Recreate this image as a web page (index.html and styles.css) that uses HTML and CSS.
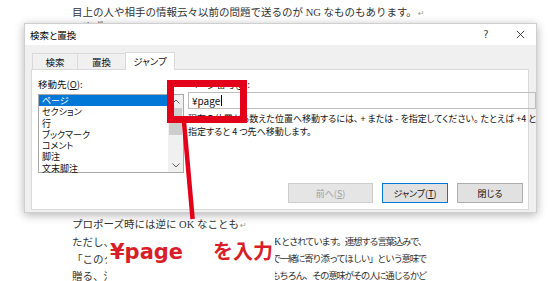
FILE: index.html
```html
<!DOCTYPE html>
<html lang="ja">
<head>
<meta charset="utf-8">
<title>検索と置換 - ジャンプ</title>
<link rel="stylesheet" href="styles.css">
</head>
<body>
<div class="page">
  <div class="doc">
    <p class="line l1">目上の人や相手の情報云々以前の問題で送るのが <span class="lat">NG</span> なものもあります。<span class="ret">↵</span></p>
    <p class="line l2">　まず<span class="ret">↵</span></p>
    <div class="lower">
      <p class="line">プロポーズ時には逆に <span class="lat">OK</span> なことも<span class="ret">↵</span></p>
      <p class="line row"><span class="lft">ただし、</span><span class="r"><span class="lat">OK</span> とされています。連想する言葉込みで、</span></p>
      <p class="line row"><span class="lft">「このタ</span><span class="r">まで一緒に寄り添ってほしい」という意味で</span></p>
      <p class="line row"><span class="lft">贈る、汀</span><span class="r">。もちろん、その意味がその人に通じるかど</span></p>
    </div>
  </div>

  <div class="dialog">
    <div class="titlebar">
      <span class="title">検索と置換</span>
      <span class="tb-btns">
        <span class="help">?</span>
        <span class="close"><svg width="10" height="10" viewBox="0 0 10 10"><path d="M1 1 L9 9 M9 1 L1 9" stroke="#333" stroke-width="1" fill="none"/></svg></span>
      </span>
    </div>
    <div class="dbody">
      <div class="tabs">
        <span class="tab t1">検索</span>
        <span class="tab t2">置換</span>
        <span class="tab t3 active">ジャンプ</span>
      </div>
      <div class="panel">
        <div class="cols">
          <div class="left">
            <div class="lbl">移動先(<u>O</u>):</div>
            <div class="listbox">
              <ul class="items">
                <li class="sel">ページ</li>
                <li>セクション</li>
                <li>行</li>
                <li>ブックマーク</li>
                <li>コメント</li>
                <li>脚注</li>
                <li>文末脚注</li>
              </ul>
              <div class="vscroll">
                <span class="arrow"><svg width="8" height="5" viewBox="0 0 8 5"><path d="M0.5 4.5 L4 1 L7.5 4.5" stroke="#606060" stroke-width="1" fill="none"/></svg></span>
                <span class="thumb"></span>
                <span class="arrow down"><svg width="8" height="5" viewBox="0 0 8 5"><path d="M0.5 0.5 L4 4 L7.5 0.5" stroke="#606060" stroke-width="1" fill="none"/></svg></span>
              </div>
            </div>
          </div>
          <div class="right">
            <div class="lbl">ページ番号(<u>E</u>):</div>
            <div class="input">¥page<span class="caret"></span></div>
            <p class="desc">現在の位置から数えた位置へ移動するには、 + または - を指定してください。 たとえば +4 と<br>指定すると 4 つ先へ移動します。</p>
          </div>
        </div>
        <div class="btns">
          <span class="btn disabled">前へ(<u>S</u>)</span>
          <span class="btn default">ジャンプ(<u>T</u>)</span>
          <span class="btn">閉じる</span>
        </div>
      </div>
    </div>
  </div>

  <div class="mark-box"></div>
  <svg class="mark-line" width="550" height="281" viewBox="0 0 550 281"><line x1="184" y1="122" x2="192.6" y2="219" stroke="#e2001a" stroke-width="4.5"/></svg>
  <div class="callout"><span class="c-lat">¥page</span><span class="c-ja">を入力</span></div>
</div>
</body>
</html>
```

FILE: styles.css
```css
* { box-sizing: border-box; margin: 0; padding: 0; }
html, body { width: 550px; height: 281px; overflow: hidden; background: #fff; }
body { font-family: "Noto Sans CJK JP", sans-serif; }
.page { position: relative; width: 550px; height: 281px; overflow: hidden; }

/* background document */
.doc { padding: 5px 0 0 72px; font-family: "Liberation Serif", "Noto Sans CJK JP", serif; font-size: 10.5px; color: #333; }
.line { white-space: nowrap; line-height: 18px; }
.l1 { line-height: 16px; }
.l2 { line-height: 10px; }
.lat { font-family: "Liberation Serif", serif; }
.ret { color: #9a9a9a; font-size: 8px; margin-left: 1px; font-family: "DejaVu Sans", sans-serif; letter-spacing: 0; }
.lower { margin-top: 183px; }
.lower .line { line-height: 17px; }
.row { display: flex; width: 354px; }
.row .lft { flex: 0 1 auto; min-width: 0; overflow: hidden; }
.row .r { margin-left: auto; flex-shrink: 0; font-size: 9.5px; letter-spacing: -1.35px; }

/* dialog window */
.dialog { position: absolute; left: 24px; top: 23px; width: 513px; height: 190px; background: #f0f0f0; border: 1px solid #cfcfcf; box-shadow: 0 2px 9px rgba(0,0,0,0.3); display: flex; flex-direction: column; font-family: "Noto Sans CJK JP", sans-serif; font-feature-settings: "palt"; color: #000; }
.titlebar { height: 21px; background: #fff; display: flex; align-items: center; padding-left: 5px; font-size: 9.5px; }
.tb-btns { margin-left: auto; display: flex; align-items: center; }
.help { width: 20px; text-align: center; font-size: 10px; color: #444; font-family: "DejaVu Sans", sans-serif; }
.close { width: 32px; margin-left: 8px; display: flex; justify-content: center; align-items: center; }
.close svg { width: 9px; height: 9px; }

.dbody { flex: 1; display: flex; flex-direction: column; padding: 8px 7px 2px 6px; }
.tabs { display: flex; align-items: flex-end; height: 16px; padding-left: 1px; position: relative; z-index: 1; }
.tab { height: 16px; border: 1px solid #d9d9d9; border-bottom: none; background: #f0f0f0; font-size: 9.5px; display: flex; align-items: center; justify-content: center; color: #111; }
.t1 { width: 46px; }
.t2 { width: 49px; margin-left: -1px; }
.t3 { width: 50px; margin-left: -1px; }
.tab.active { background: #fff; height: 18px; margin-bottom: -1px; padding-bottom: 1px; }

.panel { flex: 1; background: #fff; border: 1px solid #d9d9d9; padding: 8px 5px 6px 6px; display: flex; flex-direction: column; }
.cols { display: grid; grid-template-columns: 146px 1fr; column-gap: 4px; }
.lbl { font-size: 9.5px; line-height: 12px; color: #111; }

.listbox { margin-top: 4px; height: 79px; border: 1px solid #a9a9a9; display: flex; }
.items { list-style: none; flex: 1; font-size: 9px; line-height: 11.3px; color: #111; }
.items li { padding-left: 3px; white-space: nowrap; }
.items li.sel { background: #0078d7; color: #fff; }
.vscroll { width: 15px; background: #f0f0f0; display: flex; flex-direction: column; align-items: center; }
.arrow { height: 13px; display: flex; align-items: center; justify-content: center; }
.thumb { width: 13px; height: 27px; background: #cdcdcd; }
.arrow.down { margin-top: auto; }

.input { margin-top: 2px; height: 17px; border: 1px solid #bdbdbd; padding-left: 3px; font-size: 10px; line-height: 15px; color: #111; display: flex; align-items: center; }
.caret { width: 1px; height: 11px; background: #000; margin-left: 1px; }
.desc { margin-top: 3px; font-size: 9px; line-height: 13px; color: #111; white-space: nowrap; }

.btns { margin-top: auto; display: flex; justify-content: flex-end; gap: 9px; }
.btn { height: 20px; width: 66px; background: #e1e1e1; border: 1px solid #adadad; font-size: 9px; display: flex; align-items: center; justify-content: center; color: #111; }
.btn.disabled { width: 85px; background: #e5e5e5; border-color: #cccccc; color: #a0a0a0; }
.btn.default { border-color: #0078d7; }

/* annotations */
.mark-box { position: absolute; left: 167px; top: 80px; width: 80px; height: 43px; border: 7px solid #e2001a; }
.mark-line { position: absolute; left: 0; top: 0; pointer-events: none; }
.callout { position: absolute; left: 107px; top: 233px; width: 168px; height: 48px; background: #fff; padding: 5px 0 0 3px; display: flex; align-items: baseline; color: #d81e28; font-weight: bold; line-height: 26px; }
.c-lat { font-family: "DejaVu Sans", sans-serif; font-size: 21px; }
.c-ja { font-family: "Noto Sans CJK JP", sans-serif; font-size: 20px; margin-left: 30px; }
```
